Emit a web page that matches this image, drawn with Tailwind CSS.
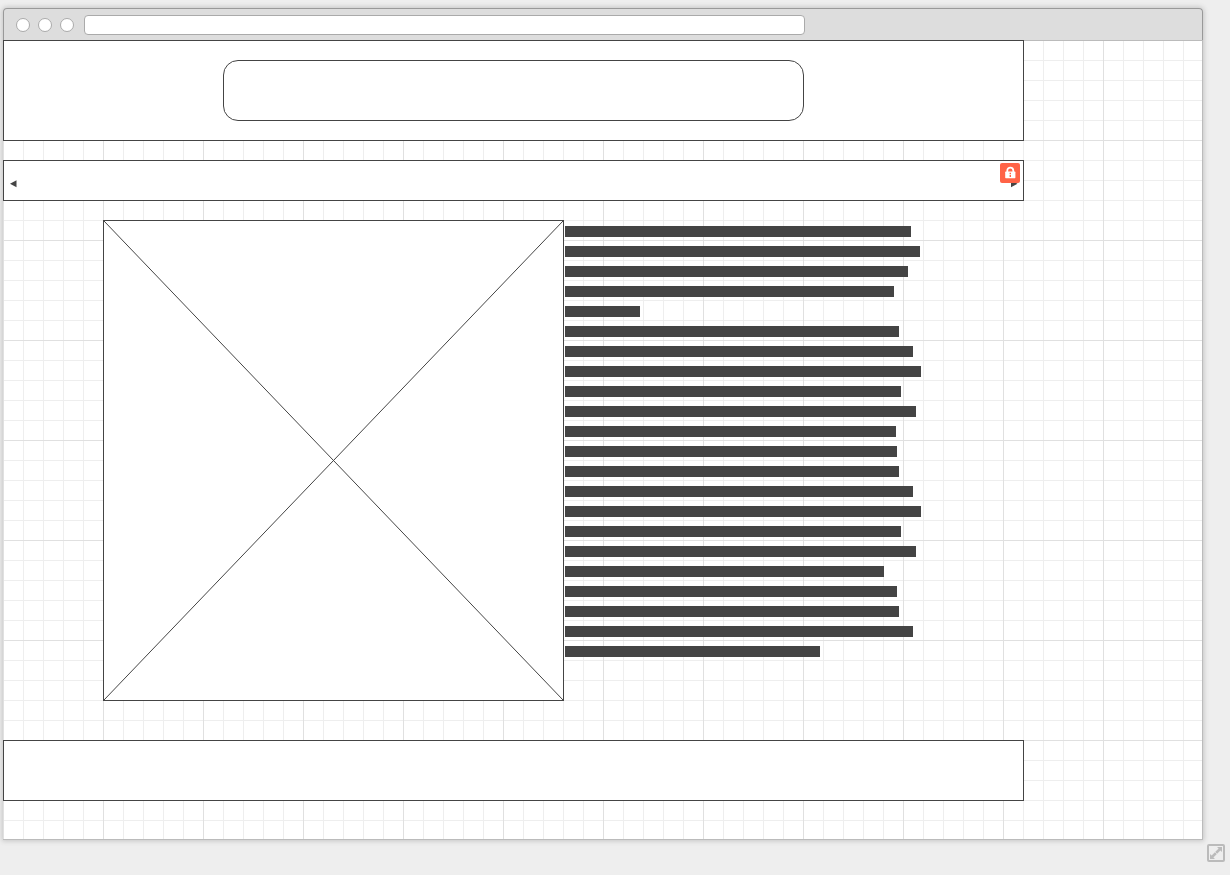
<!DOCTYPE html>
<html lang="en">
<head>
<meta charset="utf-8">
<meta name="viewport" content="width=device-width, initial-scale=1">
<title>Wireframe</title>
<script src="https://cdn.jsdelivr.net/npm/@tailwindcss/browser@4"></script>
</head>
<body class="flex min-h-screen flex-col bg-[#eeeeee] font-['Liberation_Sans',sans-serif]">
<div class="mr-[27px] ml-[3px] mt-2 flex flex-col rounded-t-[4px] shadow-[0_0_5px_1px_#c4c4c4]">
  <header class="flex h-8 items-center gap-2 rounded-t-[4px] border border-b-0 border-[#999999] bg-[#dddddd] pl-3">
    <button type="button" aria-label="Close" class="size-[14px] rounded-full border border-[#aaaaaa] bg-white"></button>
    <button type="button" aria-label="Minimise" class="size-[14px] rounded-full border border-[#aaaaaa] bg-white"></button>
    <button type="button" aria-label="Maximise" class="size-[14px] rounded-full border border-[#aaaaaa] bg-white"></button>
    <input type="text" aria-label="Address" class="ml-[2px] h-5 w-[721px] rounded-[4px] border border-[#aaaaaa] bg-white px-2 text-xs">
  </header>
  <main class="flex flex-col border-r border-b border-[#bbbbbb] bg-white bg-[linear-gradient(#bbbbbb,#bbbbbb),linear-gradient(90deg,#e0e0e0_1px,transparent_1px),linear-gradient(#e0e0e0_1px,transparent_1px),linear-gradient(90deg,#eeeeee_1px,transparent_1px),linear-gradient(#eeeeee_1px,transparent_1px)] bg-[size:100%_1px,100px_100px,100px_100px,20px_20px,20px_20px] [background-repeat:no-repeat,repeat,repeat,repeat,repeat] pb-[38px]">
    <section class="mr-[178px] flex h-[101px] items-center justify-center border border-[#444444] bg-white">
      <div class="h-[61px] w-[581px] rounded-[15px] border border-[#444444] bg-white"></div>
    </section>
    <nav class="relative mt-[19px] mr-[178px] flex h-[41px] items-center justify-between border border-[#444444] bg-white pt-[6px] pr-[5px] pl-[6px]">
      <button type="button" aria-label="Previous"><svg class="block h-2 w-[7px]" viewBox="0 0 7 8"><path d="M6.5 .3v7L0 3.8z" fill="#444"/></svg></button>
      <button type="button" aria-label="Next"><svg class="block h-2 w-[7px]" viewBox="0 0 7 8"><path d="M0 .3v7L6.5 3.8z" fill="#444"/></svg></button>
      <button type="button" aria-label="Locked" class="absolute top-[2px] right-[3px] flex size-5 items-center justify-center rounded-[2px] bg-[#ff6347]">
        <svg class="size-5" viewBox="0 0 20 20"><path d="M7.3 9.2V7.6a3 3 0 0 1 6 0V9.2" fill="none" stroke="#fff" stroke-width="1.8"/><rect x="5.2" y="8.6" width="10.2" height="6.6" rx=".6" fill="#fff"/><path d="M9.6 9.7h1.4v1.3H9.6zM9.6 11.8h1.4v2.2H9.6z" fill="#ff6347"/></svg>
      </button>
    </nav>
    <section class="mt-[19px] ml-[100px] flex items-start">
      <div class="h-[481px] w-[461px] border border-[#444444] bg-white">
        <svg class="block size-full" viewBox="0 0 459 479" preserveAspectRatio="none"><path d="M0 0l459 479M459 0L0 479" stroke="#444" stroke-width="1"/></svg>
      </div>
      <div id="text" class="ml-px flex flex-col gap-[9px] pt-[6px]"></div>
    </section>
    <footer class="mt-[39px] mr-[178px] h-[61px] border border-[#444444] bg-white"></footer>
  </main>
</div>
<div class="flex justify-end pt-1 pr-[5px]">
  <button type="button" aria-label="Expand"><svg class="block size-[18px]" viewBox="0 0 18 18"><rect x="1" y="1" width="16" height="16" rx="1" fill="none" stroke="#bbb" stroke-width="2"/><path d="M10 3h5v5l-1.6-1.6-7 7L8 15H3v-5l1.6 1.6 7-7z" fill="#bbb"/><path d="M8 8l2 2" stroke="#ddd" stroke-width="1"/></svg></button>
</div>
<script>
  const lines = [346,355,343,329,75,334,348,356,336,351,331,332,334,348,356,336,351,319,332,334,348,255];
  const text = document.getElementById('text');
  for (const width of lines) {
    const line = document.createElement('div');
    line.className = 'h-[11px] bg-[#444444]';
    line.style.width = width + 'px';
    text.append(line);
  }
</script>
</body>
</html>
